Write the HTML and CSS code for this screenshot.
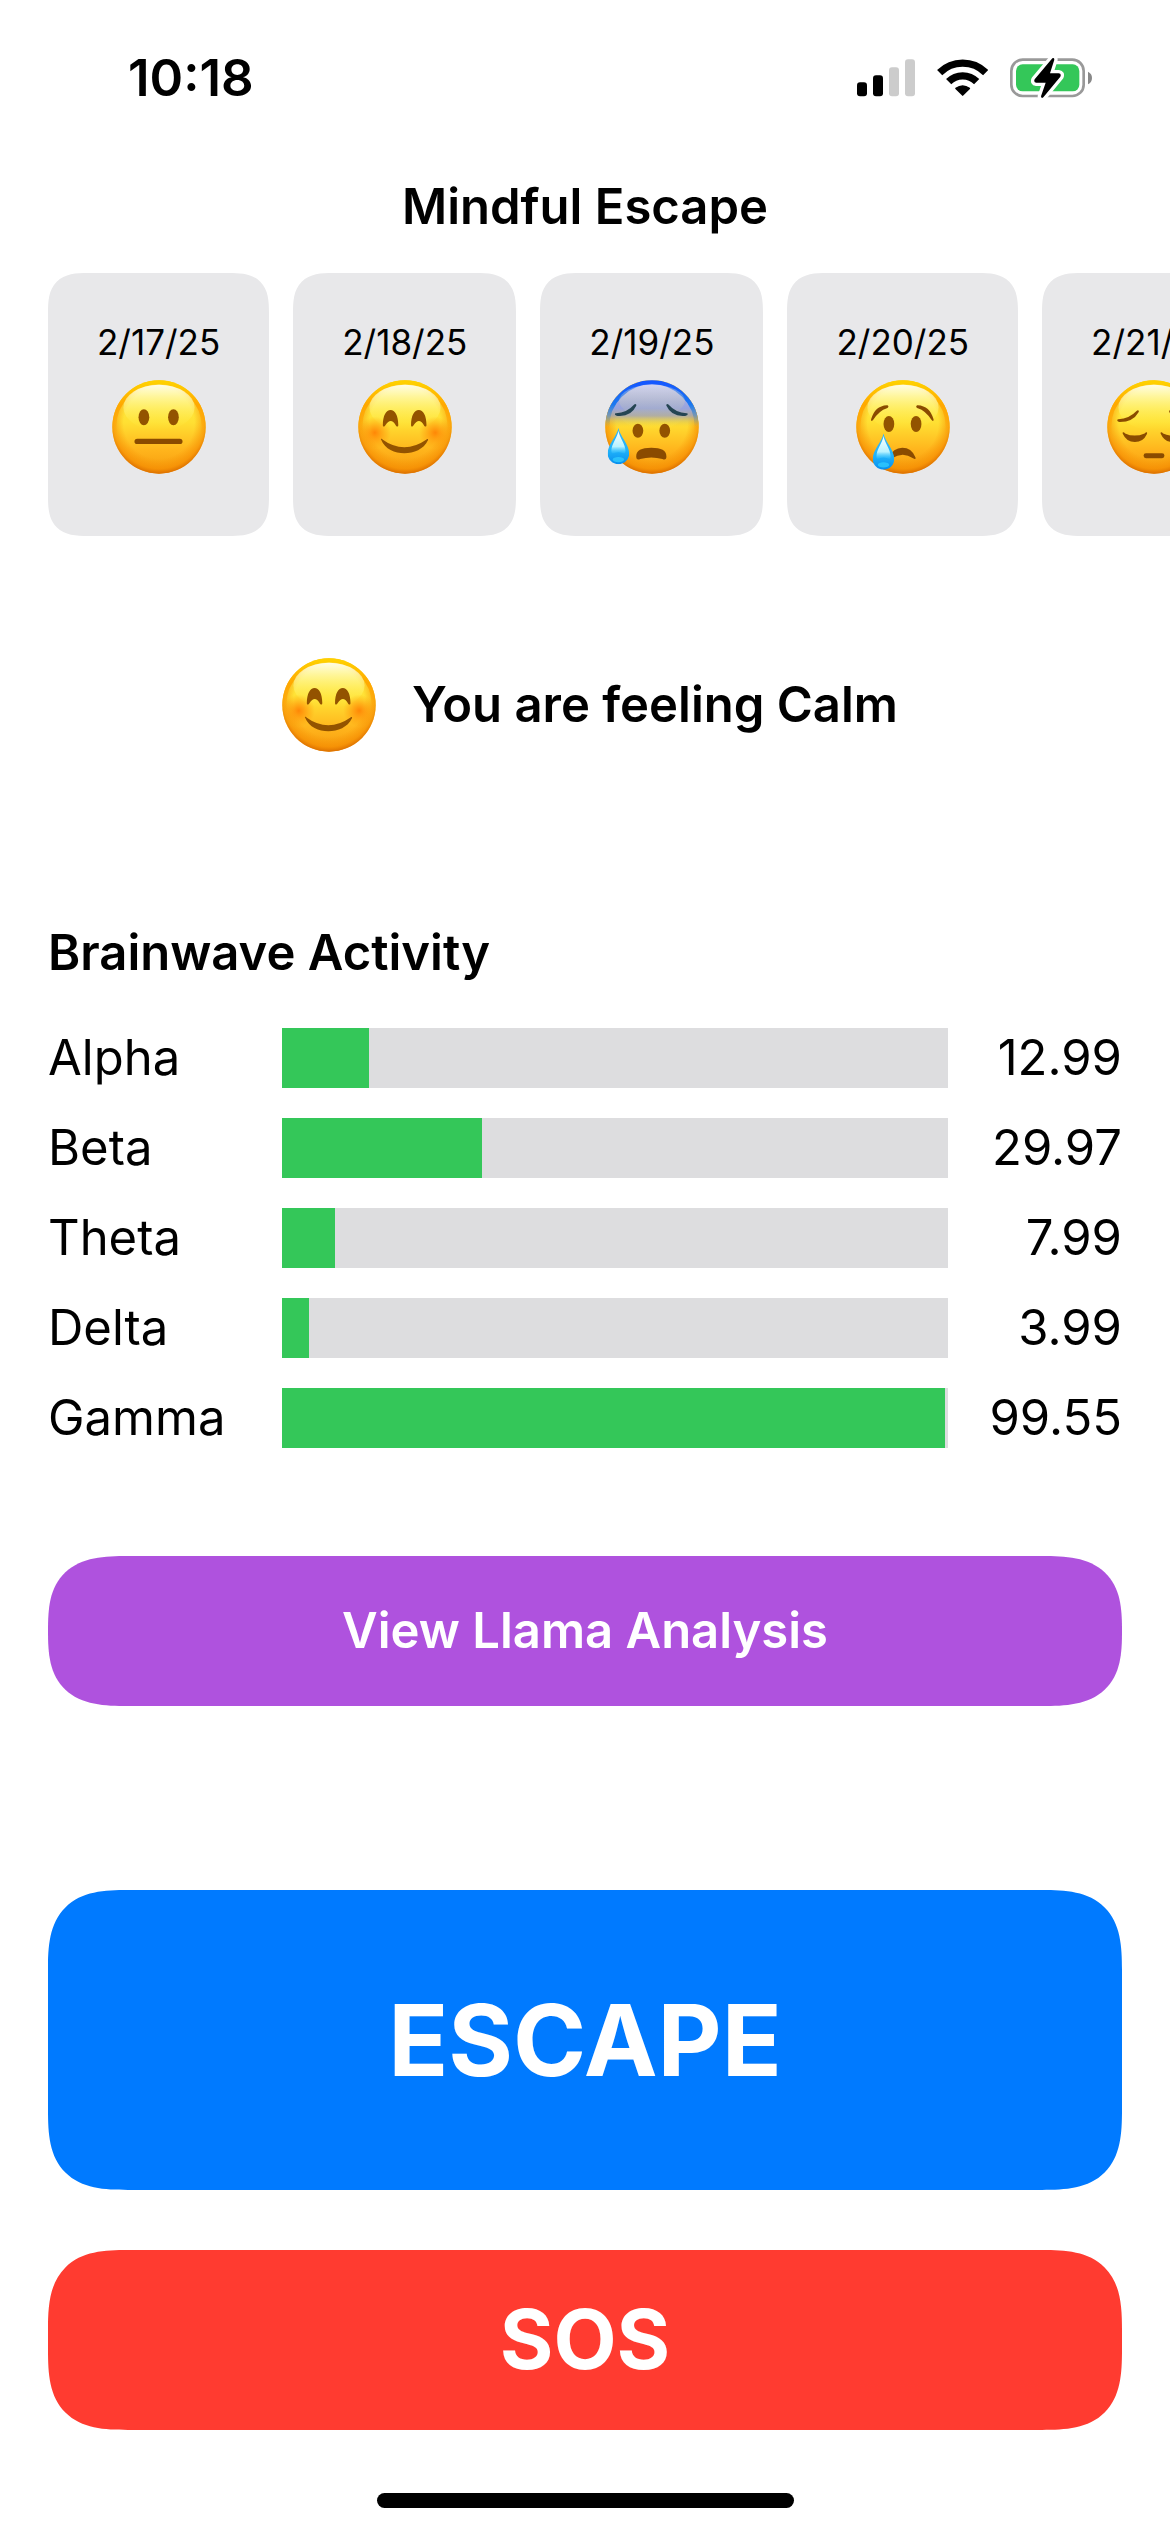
FILE: index.html
```html
<!DOCTYPE html>
<html lang="en">
<head>
    <meta charset="UTF-8">
    <meta name="viewport" content="width=device-width, initial-scale=1.0">
    <title>Mindful Escape</title>
    <link rel="stylesheet" href="styles.css">
</head>
<body>
    <!-- Shared emoji artwork -->
    <svg class="sprite" aria-hidden="true">
        <defs>
            <linearGradient id="skin" x1="0" y1="0" x2="0" y2="1">
                <stop offset="0" stop-color="#fff04a"/>
                <stop offset="0.45" stop-color="#ffe033"/>
                <stop offset="0.75" stop-color="#ffb41c"/>
                <stop offset="1" stop-color="#f59a0c"/>
            </linearGradient>
            <radialGradient id="rim" cx="0.5" cy="0.46" r="0.54">
                <stop offset="0.7" stop-color="#f78c00" stop-opacity="0"/>
                <stop offset="0.9" stop-color="#f58a00" stop-opacity="0.6"/>
                <stop offset="1" stop-color="#d96c00" stop-opacity="0.95"/>
            </radialGradient>
            <linearGradient id="shine" x1="0" y1="0" x2="0" y2="1">
                <stop offset="0" stop-color="#fffef0" stop-opacity="0.95"/>
                <stop offset="1" stop-color="#fff23c" stop-opacity="0"/>
            </linearGradient>
            <linearGradient id="top-edge" x1="0" y1="0" x2="0" y2="1">
                <stop offset="0" stop-color="#ffd000"/>
                <stop offset="0.25" stop-color="#ffa800"/>
                <stop offset="0.6" stop-color="#ff9a00" stop-opacity="0"/>
            </linearGradient>
            <radialGradient id="blush">
                <stop offset="0" stop-color="#ff7a00" stop-opacity="0.85"/>
                <stop offset="1" stop-color="#ff8a00" stop-opacity="0"/>
            </radialGradient>
            <linearGradient id="cold" x1="0" y1="0" x2="0" y2="1">
                <stop offset="0" stop-color="#b9bdf5"/>
                <stop offset="0.3" stop-color="#98a3dc"/>
                <stop offset="0.38" stop-color="#a3a3b4" stop-opacity="0.85"/>
                <stop offset="0.5" stop-color="#e6c53c" stop-opacity="0"/>
            </linearGradient>
            <linearGradient id="cold-edge" x1="0" y1="0" x2="0" y2="1">
                <stop offset="0" stop-color="#1557ff"/>
                <stop offset="0.25" stop-color="#1b79f0"/>
                <stop offset="0.5" stop-color="#6a9a90" stop-opacity="0"/>
            </linearGradient>
            <linearGradient id="tear" x1="0" y1="0" x2="0" y2="1">
                <stop offset="0" stop-color="#35b4f5"/>
                <stop offset="0.6" stop-color="#22b4fa"/>
                <stop offset="1" stop-color="#078fee"/>
            </linearGradient>
            <linearGradient id="tear-shine" x1="0" y1="0" x2="0" y2="1">
                <stop offset="0" stop-color="#ffffff"/>
                <stop offset="0.7" stop-color="#b8f2ff"/>
                <stop offset="1" stop-color="#3cc6ff" stop-opacity="0.3"/>
            </linearGradient>
        </defs>

        <symbol id="face" viewBox="0 0 280 280">
            <circle cx="140" cy="140" r="139" fill="url(#skin)"/>
            <circle cx="140" cy="140" r="139" fill="url(#rim)"/>
            <circle cx="140" cy="140" r="133" fill="none" stroke="url(#top-edge)" stroke-width="12"/>
            <ellipse cx="140" cy="82" rx="106" ry="68" fill="url(#shine)"/>
        </symbol>

        <symbol id="drop" viewBox="0 0 64 108">
            <path d="M32 0C36 24 64 48 64 76A32 32 0 0 1 0 76C0 48 28 24 32 0Z" fill="url(#tear)"/>
            <path d="M32 8C35 28 53 48 53 68C53 82 43 72 32 72S11 82 11 68C11 48 29 28 32 8Z" fill="url(#tear-shine)"/>
            <ellipse cx="32" cy="94" rx="17" ry="8" fill="#35d0ff" opacity="0.7"/>
        </symbol>

        <symbol id="neutral" viewBox="0 0 280 280">
            <use href="#face"/>
            <ellipse cx="95" cy="111" rx="16" ry="24" fill="#935300"/>
            <ellipse cx="183" cy="111" rx="16" ry="24" fill="#935300"/>
            <rect x="67" y="175" width="143" height="16" rx="8" fill="#8a4b00"/>
        </symbol>

        <symbol id="calm" viewBox="0 0 280 280">
            <use href="#face"/>
            <circle cx="50" cy="157" r="48" fill="url(#blush)"/>
            <circle cx="230" cy="157" r="48" fill="url(#blush)"/>
            <g fill="#935300">
                <path d="M74 134C74 105 84 89 97 89S120 105 120 134C120 140 115 140 112 134Q98 110 82 134C78 141 74 140 74 134Z"/>
                <path d="M158 134C158 105 168 89 181 89S204 105 204 134C204 140 199 140 196 134Q182 110 166 134C162 141 158 140 158 134Z"/>
                <path d="M69 178C66 175 71 174 74 178Q104 200 138 200T203 178C206 174 211 175 208 180C196 206 166 218 138 218S80 206 69 178Z"/>
            </g>
        </symbol>

        <symbol id="anxious" viewBox="0 0 280 280">
            <use href="#face"/>
            <circle cx="140" cy="140" r="139" fill="url(#cold)"/>
            <circle cx="140" cy="140" r="133" fill="none" stroke="url(#cold-edge)" stroke-width="12"/>
            <ellipse cx="140" cy="62" rx="98" ry="48" fill="url(#shine)" opacity="0.4"/>
            <g fill="#254553">
                <path d="M33 99Q65 98 87 73C90 69 95 72 93 77Q78 110 38 107C28 106 28 99 33 99Z"/>
                <path d="M243 99Q211 98 189 73C186 69 181 72 183 77Q198 110 238 107C248 106 248 99 243 99Z"/>
            </g>
            <ellipse cx="98" cy="151" rx="16" ry="21" fill="#935300"/>
            <ellipse cx="178" cy="151" rx="16" ry="21" fill="#935300"/>
            <path d="M93 228C93 210 108 202 138 202S183 210 183 228C183 237 178 238 171 235Q138 226 105 235C98 238 93 237 93 228Z" fill="#8a4b00"/>
            <use href="#drop" x="8" y="143" width="64" height="108"/>
        </symbol>

        <symbol id="sad" viewBox="0 0 280 280">
            <use href="#face"/>
            <g fill="#8a4b00">
                <path d="M45 117Q56 77 92 75C98 75 98 82 92 84Q69 91 52 118C48 124 44 123 45 117Z"/>
                <path d="M231 117Q220 77 184 75C178 75 178 82 184 84Q207 91 224 118C228 124 232 123 231 117Z"/>
                <path d="M97 232Q111 202 138 202T177 230C179 236 175 237 170 233Q140 212 107 233C102 237 96 237 97 232Z"/>
            </g>
            <ellipse cx="98" cy="131" rx="16" ry="24" fill="#935300"/>
            <ellipse cx="179" cy="131" rx="16" ry="24" fill="#935300"/>
            <use href="#drop" x="50" y="159" width="64" height="108"/>
        </symbol>

        <symbol id="pensive" viewBox="0 0 280 280">
            <use href="#face"/>
            <g fill="#8a4b00">
                <path d="M34 117Q66 115 88 92C92 88 97 91 94 96Q78 125 38 125C29 125 29 117 34 117Z"/>
                <path d="M246 117Q214 115 192 92C188 88 183 91 186 96Q202 125 242 125C251 125 251 117 246 117Z"/>
                <path d="M47 160C45 154 50 154 54 159Q82 172 112 159C117 154 121 154 119 161Q108 185 83 185T47 160Z"/>
                <path d="M160 160C158 154 163 154 167 159Q195 172 225 159C230 154 234 154 232 161Q221 185 196 185T160 160Z"/>
                <rect x="109" y="218" width="62" height="15" rx="7"/>
            </g>
        </symbol>
    </svg>

    <header class="status-bar">
        <span class="time">10:18</span>
        <div class="status-icons">
            <svg class="signal" viewBox="108 80 174 126" aria-label="Signal">
                <rect x="108" y="156" width="30" height="42" rx="9"/>
                <rect x="156" y="135" width="30" height="63" rx="9"/>
                <rect x="204" y="111" width="30" height="87" rx="9" fill="#cccccc"/>
                <rect x="252" y="87" width="30" height="111" rx="9" fill="#cccccc"/>
            </svg>
            <svg class="wifi" viewBox="347 80 153 126" aria-label="Wi-Fi">
                <path d="M355 127A98 98 0 0 1 493 127" fill="none" stroke="#000" stroke-width="22"/>
                <path d="M382 154A59 59 0 0 1 466 154" fill="none" stroke="#000" stroke-width="22"/>
                <path d="M404 174Q424 160 444 174L424 194Z" stroke="#000" stroke-width="5" stroke-linejoin="round"/>
            </svg>
            <svg class="battery" viewBox="567 80 246 126" aria-label="Battery charging">
                <rect x="571" y="88" width="217" height="109" rx="34" fill="none" stroke="#999999" stroke-width="8"/>
                <path d="M801 124Q813 130 813 143T801 162Z" fill="#888888"/>
                <rect x="585" y="102" width="190" height="81" rx="20" fill="#34c759"/>
                <path d="M694 84L641 147Q637 156 646 157L674 157L660 198Q661 206 667 201L718 139Q722 130 713 129L687 129L700 88Q700 80 694 84Z" stroke="#fff" stroke-width="20" stroke-linejoin="round" paint-order="stroke"/>
            </svg>
        </div>
    </header>

    <main class="screen">
        <h1>Mindful Escape</h1>

        <section class="history">
            <div class="day">
                <span class="date">2/17/25</span>
                <svg class="emoji" role="img" aria-label="Neutral"><use href="#neutral"/></svg>
            </div>
            <div class="day">
                <span class="date">2/18/25</span>
                <svg class="emoji" role="img" aria-label="Calm"><use href="#calm"/></svg>
            </div>
            <div class="day">
                <span class="date">2/19/25</span>
                <svg class="emoji" role="img" aria-label="Anxious"><use href="#anxious"/></svg>
            </div>
            <div class="day">
                <span class="date">2/20/25</span>
                <svg class="emoji" role="img" aria-label="Sad"><use href="#sad"/></svg>
            </div>
            <div class="day">
                <span class="date">2/21/25</span>
                <svg class="emoji" role="img" aria-label="Pensive"><use href="#pensive"/></svg>
            </div>
        </section>

        <section class="feeling">
            <svg class="emoji" role="img" aria-label="Calm"><use href="#calm"/></svg>
            <p>You are feeling Calm</p>
        </section>

        <section class="brainwaves">
            <h2>Brainwave Activity</h2>
            <div class="wave">
                <span class="name">Alpha</span>
                <div class="track"><div class="fill" style="width: 12.99%"></div></div>
                <span class="value">12.99</span>
            </div>
            <div class="wave">
                <span class="name">Beta</span>
                <div class="track"><div class="fill" style="width: 29.97%"></div></div>
                <span class="value">29.97</span>
            </div>
            <div class="wave">
                <span class="name">Theta</span>
                <div class="track"><div class="fill" style="width: 7.99%"></div></div>
                <span class="value">7.99</span>
            </div>
            <div class="wave">
                <span class="name">Delta</span>
                <div class="track"><div class="fill" style="width: 3.99%"></div></div>
                <span class="value">3.99</span>
            </div>
            <div class="wave">
                <span class="name">Gamma</span>
                <div class="track"><div class="fill" style="width: 99.55%"></div></div>
                <span class="value">99.55</span>
            </div>
        </section>

        <div class="actions">
            <button type="button" class="analysis">View Llama Analysis</button>
            <button type="button" class="escape">ESCAPE</button>
            <button type="button" class="sos">SOS</button>
        </div>
    </main>

    <div class="home-indicator"></div>
</body>
</html>
```
FILE: styles.css
```css
* {
    box-sizing: border-box;
}
body {
    font-family: Inter, "Liberation Sans", sans-serif;
    font-size: 49px;
    line-height: 60px;
    margin: 0;
    color: #000;
    background-color: #fff;
    overflow-x: hidden;
}
.sprite {
    display: block;
    width: 0;
    height: 0;
}

/* Status bar */
.status-bar {
    display: flex;
    justify-content: space-between;
    align-items: center;
    height: 156px;
    padding: 0 78px 0 128px;
}
.time {
    font-size: 51px;
    font-weight: 600;
}
.status-icons {
    display: flex;
    gap: 22px;
}
.status-icons svg {
    display: block;
    height: 42px;
}
.signal {
    width: 58px;
}
.wifi {
    width: 51px;
}
.battery {
    width: 82px;
}

.screen {
    padding: 0 48px;
}
h1, h2, p {
    margin: 0;
    font-size: 49px;
    font-weight: 600;
}
h1 {
    margin: 21px 0 36px;
    text-align: center;
}
.emoji {
    display: block;
    flex: none;
    width: 94px;
    height: 94px;
}

/* Mood history */
.history {
    display: flex;
    gap: 24px;
    margin-right: -48px;
    overflow: hidden;
}
.day {
    display: flex;
    flex: none;
    flex-direction: column;
    align-items: center;
    gap: 16px;
    padding: 48px 49px 62px;
    border-radius: 30px;
    background-color: #e8e8ea;
}
.date {
    font-size: 35px;
    line-height: 43px;
}
.feeling {
    display: flex;
    justify-content: center;
    align-items: center;
    gap: 36px;
    margin-top: 122px;
    padding-left: 10px;
}

/* Brainwave chart */
.brainwaves {
    display: flex;
    flex-direction: column;
    gap: 30px;
    margin-top: 171px;
}
h2 {
    margin-bottom: 15px;
}
.wave {
    display: grid;
    grid-template-columns: 234px 1fr 174px;
}
.track {
    background-color: #dddddf;
}
.fill {
    height: 100%;
    background-color: #34c759;
}
.value {
    text-align: right;
}

/* Buttons */
.actions {
    display: flex;
    flex-direction: column;
    margin-top: 108px;
}
button {
    border: none;
    border-radius: 60px;
    color: #fff;
    font-family: inherit;
    cursor: pointer;
}
.analysis {
    padding: 45px;
    font-size: 49px;
    font-weight: 600;
    line-height: 60px;
    background-color: #af52de;
}
.escape {
    margin: 184px 0 60px;
    padding: 90px;
    font-size: 99px;
    font-weight: 700;
    line-height: 120px;
    background-color: #007aff;
}
.sos {
    padding: 40px;
    font-size: 82px;
    font-weight: 700;
    line-height: 100px;
    background-color: #ff3b30;
}
/* Continuous corners where the browser can draw them */
@supports (corner-shape: superellipse(1.5)) {
    button {
        border-radius: 80px;
        corner-shape: superellipse(1.5);
    }
    .analysis {
        border-radius: 80px / 75px;
    }
    .day {
        border-radius: 40px;
        corner-shape: superellipse(1.5);
    }
}

.home-indicator {
    width: 417px;
    height: 15px;
    margin: 63px auto 24px;
    border-radius: 8px;
    background-color: #000;
}
```
